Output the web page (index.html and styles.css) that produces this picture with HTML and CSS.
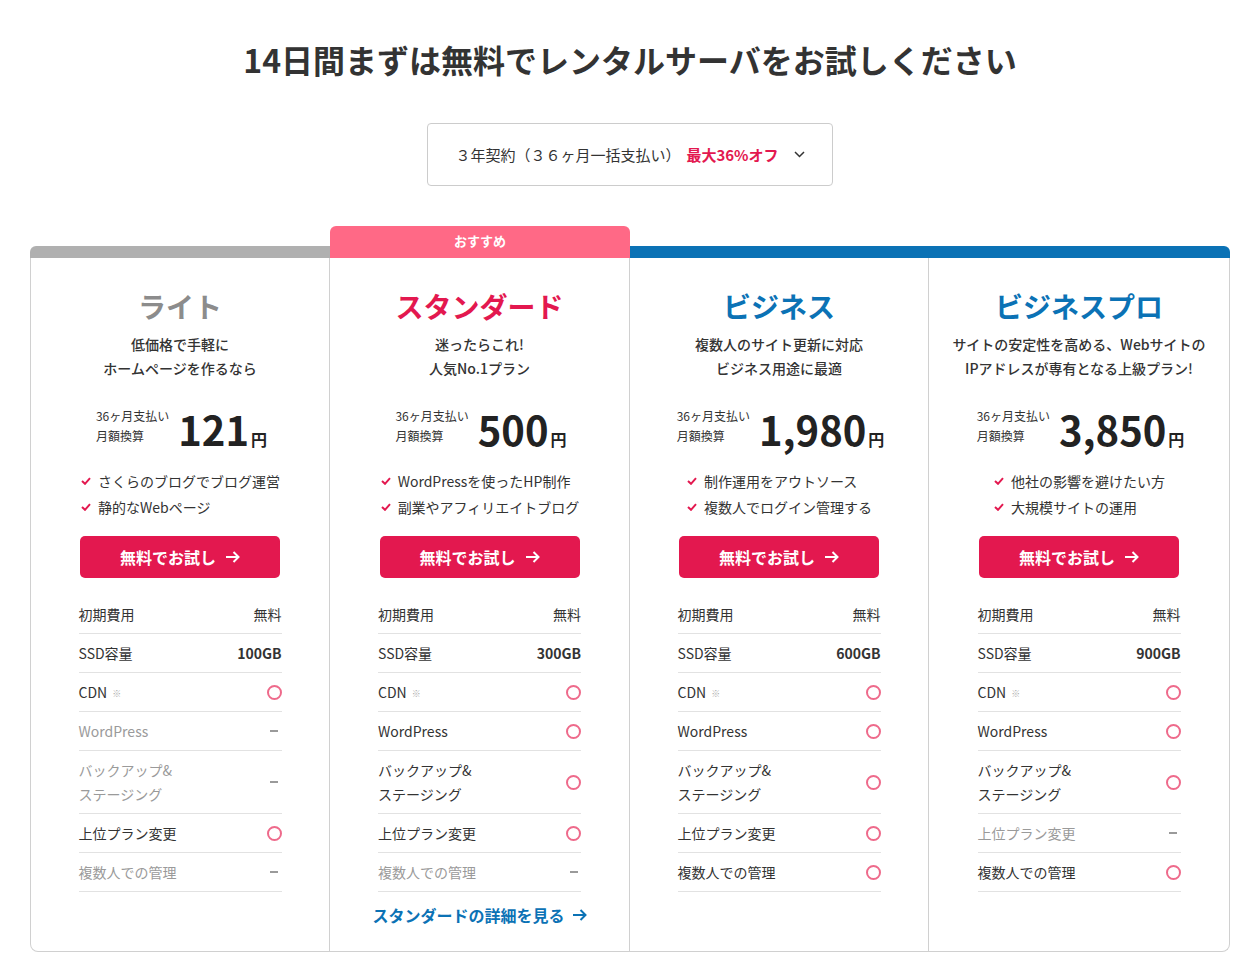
FILE: index.html
```html
<!DOCTYPE html>
<html lang="ja">
<head>
<meta charset="utf-8">
<title>料金プラン</title>
<link rel="stylesheet" href="styles.css">
</head>
<body>
<main class="page">
  <h1 class="title">14日間まずは無料でレンタルサーバをお試しください</h1>

  <div class="select-wrap">
    <div class="select">
      <span class="select-text">３年契約（３６ヶ月一括支払い）</span>
      <span class="select-off">最大36%オフ</span>
      <svg class="chev" width="11" height="7" viewBox="0 0 11 7"><path d="M1 1 L5.5 5.5 L10 1" fill="none" stroke="#333" stroke-width="1.5"/></svg>
    </div>
  </div>

  <section class="plans">
    <!-- Lite -->
    <div class="plan plan-lite">
      <div class="plan-head"><div class="bar bar-gray"></div></div>
      <div class="plan-body">
        <h2 class="plan-name name-gray">ライト</h2>
        <p class="plan-desc">低価格で手軽に<br>ホームページを作るなら</p>
        <div class="price">
          <div class="price-label">36ヶ月支払い<br>月額換算</div>
          <div class="price-num">121<span class="yen">円</span></div>
        </div>
        <ul class="points">
          <li><svg class="check" width="10" height="8" viewBox="0 0 10 8"><path d="M1 4 L4 6.8 L9 1.2" fill="none" stroke="#e3184f" stroke-width="2"/></svg>さくらのブログでブログ運営</li>
          <li><svg class="check" width="10" height="8" viewBox="0 0 10 8"><path d="M1 4 L4 6.8 L9 1.2" fill="none" stroke="#e3184f" stroke-width="2"/></svg>静的なWebページ</li>
        </ul>
        <a class="btn" href="#">無料でお試し<svg class="arrow" width="15" height="12" viewBox="0 0 15 12"><path d="M1 6 H13.5 M8.5 1 L13.5 6 L8.5 11" fill="none" stroke="#fff" stroke-width="2"/></svg></a>
        <div class="specs">
          <div class="row"><span class="label">初期費用</span><span class="val">無料</span></div>
          <div class="row"><span class="label">SSD容量</span><span class="val strong">100GB</span></div>
          <div class="row"><span class="label">CDN <small class="note">※</small></span><span class="mark yes"></span></div>
          <div class="row off"><span class="label">WordPress</span><span class="mark no"></span></div>
          <div class="row off"><span class="label">バックアップ&amp;<br>ステージング</span><span class="mark no"></span></div>
          <div class="row"><span class="label">上位プラン変更</span><span class="mark yes"></span></div>
          <div class="row off"><span class="label">複数人での管理</span><span class="mark no"></span></div>
        </div>
      </div>
    </div>

    <!-- Standard -->
    <div class="plan plan-std">
      <div class="plan-head"><div class="tab">おすすめ</div></div>
      <div class="plan-body">
        <h2 class="plan-name name-red">スタンダード</h2>
        <p class="plan-desc">迷ったらこれ!<br>人気No.1プラン</p>
        <div class="price">
          <div class="price-label">36ヶ月支払い<br>月額換算</div>
          <div class="price-num">500<span class="yen">円</span></div>
        </div>
        <ul class="points">
          <li><svg class="check" width="10" height="8" viewBox="0 0 10 8"><path d="M1 4 L4 6.8 L9 1.2" fill="none" stroke="#e3184f" stroke-width="2"/></svg>WordPressを使ったHP制作</li>
          <li><svg class="check" width="10" height="8" viewBox="0 0 10 8"><path d="M1 4 L4 6.8 L9 1.2" fill="none" stroke="#e3184f" stroke-width="2"/></svg>副業やアフィリエイトブログ</li>
        </ul>
        <a class="btn" href="#">無料でお試し<svg class="arrow" width="15" height="12" viewBox="0 0 15 12"><path d="M1 6 H13.5 M8.5 1 L13.5 6 L8.5 11" fill="none" stroke="#fff" stroke-width="2"/></svg></a>
        <div class="specs">
          <div class="row"><span class="label">初期費用</span><span class="val">無料</span></div>
          <div class="row"><span class="label">SSD容量</span><span class="val strong">300GB</span></div>
          <div class="row"><span class="label">CDN <small class="note">※</small></span><span class="mark yes"></span></div>
          <div class="row"><span class="label">WordPress</span><span class="mark yes"></span></div>
          <div class="row"><span class="label">バックアップ&amp;<br>ステージング</span><span class="mark yes"></span></div>
          <div class="row"><span class="label">上位プラン変更</span><span class="mark yes"></span></div>
          <div class="row off"><span class="label">複数人での管理</span><span class="mark no"></span></div>
        </div>
        <a class="more" href="#">スタンダードの詳細を見る<svg class="arrow" width="15" height="12" viewBox="0 0 15 12"><path d="M1 6 H13.5 M8.5 1 L13.5 6 L8.5 11" fill="none" stroke="#0b72b5" stroke-width="2"/></svg></a>
      </div>
    </div>

    <!-- Business -->
    <div class="plan plan-biz">
      <div class="plan-head"><div class="bar bar-blue"></div></div>
      <div class="plan-body">
        <h2 class="plan-name name-blue">ビジネス</h2>
        <p class="plan-desc">複数人のサイト更新に対応<br>ビジネス用途に最適</p>
        <div class="price">
          <div class="price-label">36ヶ月支払い<br>月額換算</div>
          <div class="price-num">1,980<span class="yen">円</span></div>
        </div>
        <ul class="points">
          <li><svg class="check" width="10" height="8" viewBox="0 0 10 8"><path d="M1 4 L4 6.8 L9 1.2" fill="none" stroke="#e3184f" stroke-width="2"/></svg>制作運用をアウトソース</li>
          <li><svg class="check" width="10" height="8" viewBox="0 0 10 8"><path d="M1 4 L4 6.8 L9 1.2" fill="none" stroke="#e3184f" stroke-width="2"/></svg>複数人でログイン管理する</li>
        </ul>
        <a class="btn" href="#">無料でお試し<svg class="arrow" width="15" height="12" viewBox="0 0 15 12"><path d="M1 6 H13.5 M8.5 1 L13.5 6 L8.5 11" fill="none" stroke="#fff" stroke-width="2"/></svg></a>
        <div class="specs">
          <div class="row"><span class="label">初期費用</span><span class="val">無料</span></div>
          <div class="row"><span class="label">SSD容量</span><span class="val strong">600GB</span></div>
          <div class="row"><span class="label">CDN <small class="note">※</small></span><span class="mark yes"></span></div>
          <div class="row"><span class="label">WordPress</span><span class="mark yes"></span></div>
          <div class="row"><span class="label">バックアップ&amp;<br>ステージング</span><span class="mark yes"></span></div>
          <div class="row"><span class="label">上位プラン変更</span><span class="mark yes"></span></div>
          <div class="row"><span class="label">複数人での管理</span><span class="mark yes"></span></div>
        </div>
      </div>
    </div>

    <!-- Business Pro -->
    <div class="plan plan-pro">
      <div class="plan-head"><div class="bar bar-blue"></div></div>
      <div class="plan-body">
        <h2 class="plan-name name-blue">ビジネスプロ</h2>
        <p class="plan-desc">サイトの安定性を高める、Webサイトの<br>IPアドレスが専有となる上級プラン!</p>
        <div class="price">
          <div class="price-label">36ヶ月支払い<br>月額換算</div>
          <div class="price-num">3,850<span class="yen">円</span></div>
        </div>
        <ul class="points">
          <li><svg class="check" width="10" height="8" viewBox="0 0 10 8"><path d="M1 4 L4 6.8 L9 1.2" fill="none" stroke="#e3184f" stroke-width="2"/></svg>他社の影響を避けたい方</li>
          <li><svg class="check" width="10" height="8" viewBox="0 0 10 8"><path d="M1 4 L4 6.8 L9 1.2" fill="none" stroke="#e3184f" stroke-width="2"/></svg>大規模サイトの運用</li>
        </ul>
        <a class="btn" href="#">無料でお試し<svg class="arrow" width="15" height="12" viewBox="0 0 15 12"><path d="M1 6 H13.5 M8.5 1 L13.5 6 L8.5 11" fill="none" stroke="#fff" stroke-width="2"/></svg></a>
        <div class="specs">
          <div class="row"><span class="label">初期費用</span><span class="val">無料</span></div>
          <div class="row"><span class="label">SSD容量</span><span class="val strong">900GB</span></div>
          <div class="row"><span class="label">CDN <small class="note">※</small></span><span class="mark yes"></span></div>
          <div class="row"><span class="label">WordPress</span><span class="mark yes"></span></div>
          <div class="row"><span class="label">バックアップ&amp;<br>ステージング</span><span class="mark yes"></span></div>
          <div class="row off"><span class="label">上位プラン変更</span><span class="mark no"></span></div>
          <div class="row"><span class="label">複数人での管理</span><span class="mark yes"></span></div>
        </div>
      </div>
    </div>
  </section>
</main>
</body>
</html>
```

FILE: styles.css
```css
* { box-sizing: border-box; }

html, body {
  margin: 0;
  padding: 0;
  background: #fff;
}

body {
  font-family: "Noto Sans CJK JP", "Noto Sans", sans-serif;
  color: #333;
}

.page {
  width: 1200px;
  margin: 0 auto;
  padding-top: 34px;
}

.title {
  margin: 0;
  text-align: center;
  font-size: 32px;
  line-height: 50px;
  font-weight: 700;
  color: #333;
}

.select-wrap {
  display: flex;
  justify-content: center;
  margin-top: 39px;
}

.select {
  width: 406px;
  height: 63px;
  border: 1px solid #ccc;
  border-radius: 4px;
  display: flex;
  align-items: center;
  justify-content: center;
  font-size: 15px;
  white-space: nowrap;
}

.select-text { color: #333; }

.select-off {
  color: #e3184f;
  font-weight: 700;
  margin-left: 6px;
}

.chev { margin-left: 15px; }

/* plans */
.plans {
  display: flex;
  align-items: stretch;
  margin-top: 40px;
}

.plan {
  flex: 0 0 300px;
  display: flex;
  flex-direction: column;
}

.plan-biz { flex-basis: 299px; }
.plan-pro { flex-basis: 301px; }

.plan-head {
  height: 32px;
  display: flex;
  align-items: flex-end;
}

.bar {
  width: 100%;
  height: 12px;
}

.bar-gray { background: #b0b0b0; }
.bar-blue { background: #0b72b5; }

.plan-lite .bar { border-top-left-radius: 6px; }
.plan-pro .bar { border-top-right-radius: 6px; }

.tab {
  width: 100%;
  height: 32px;
  background: #ff6986;
  border-radius: 6px 6px 0 0;
  color: #fff;
  font-size: 13px;
  font-weight: 700;
  text-align: center;
  line-height: 30px;
}

.plan-body {
  flex: 1;
  display: flex;
  flex-direction: column;
  align-items: center;
  border-right: 1px solid #d0d0d0;
  border-bottom: 1px solid #d0d0d0;
  padding: 28px 0 24px;
}

.plan-lite .plan-body {
  border-left: 1px solid #d0d0d0;
  border-bottom-left-radius: 8px;
}

.plan-pro .plan-body { border-bottom-right-radius: 8px; }

.plan-name {
  margin: 0;
  font-size: 28px;
  line-height: 40px;
  font-weight: 700;
}

.name-gray { color: #8c8c8c; }
.name-red { color: #e3184f; }
.name-blue { color: #0b72b5; }

.plan-desc {
  margin: 6px 0 0;
  font-size: 14px;
  line-height: 24px;
  text-align: center;
  font-weight: 500;
  color: #333;
  white-space: nowrap;
}

.price {
  display: flex;
  align-items: flex-end;
  margin-top: 26px;
  padding-left: 3px;
}

.price-label {
  font-size: 12px;
  line-height: 20px;
  color: #333;
  white-space: nowrap;
}

.price-num {
  margin-left: 9px;
  margin-bottom: -3px;
  font-size: 40px;
  line-height: 40px;
  font-weight: 700;
  color: #222;
  white-space: nowrap;
}

.yen {
  font-size: 16px;
  line-height: 0;
  margin-left: 2px;
}

.points {
  list-style: none;
  margin: 22px 0 0;
  padding: 0;
  font-size: 14px;
  line-height: 26px;
  color: #333;
}

.points li {
  display: flex;
  align-items: center;
  white-space: nowrap;
}

.check { margin-right: 7px; margin-left: 1px; }

.btn {
  display: flex;
  align-items: center;
  justify-content: center;
  width: 200px;
  height: 42px;
  margin-top: 16px;
  background: #e3184f;
  border-radius: 5px;
  color: #fff;
  font-size: 16px;
  font-weight: 700;
  text-decoration: none;
}

.btn .arrow { margin-left: 9px; }

.specs {
  width: 203px;
  margin-top: 17px;
  font-size: 14px;
}

.row {
  display: flex;
  align-items: center;
  justify-content: space-between;
  padding: 7px 0;
  line-height: 24px;
  border-bottom: 1px solid #e2e2e2;
  color: #333;
}

.label { white-space: nowrap; }

.row.off .label { color: #9a9a9a; }

.val.strong { font-weight: 700; }

.note {
  font-size: 9px;
  line-height: 0;
  color: #aaa;
  margin-left: 2px;
  vertical-align: middle;
}

.mark {
  width: 15px;
  height: 15px;
  display: flex;
  align-items: center;
  justify-content: center;
}

.mark.yes {
  border: 2px solid #ee6a8b;
  border-radius: 50%;
}

.mark.no::before {
  content: "";
  width: 8px;
  height: 2px;
  background: #9a9a9a;
}

.more {
  display: flex;
  align-items: center;
  margin-top: 11px;
  font-size: 16px;
  line-height: 24px;
  font-weight: 700;
  color: #0b72b5;
  text-decoration: none;
  white-space: nowrap;
}

.more .arrow { margin-left: 7px; }
```
